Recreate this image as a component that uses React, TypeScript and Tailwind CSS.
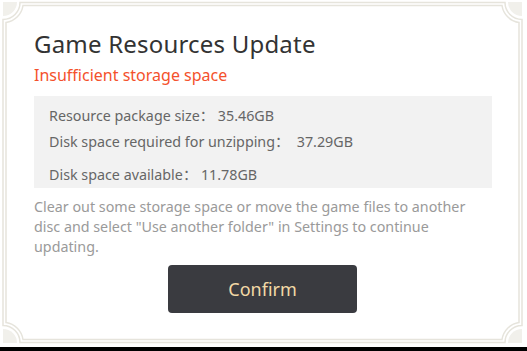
import React from "react";

function Frame() {
  const c = "#e6e4dc";
  return (
    <svg className="absolute inset-0 pointer-events-none" width="527" height="351" viewBox="0 0 527 351">
      <g fill="#f1f0eb">
        <path d="M3 2 H17 A14 14 0 0 1 3 16 Z" />
        <path d="M522 2 H508 A14 14 0 0 0 522 16 Z" />
        <path d="M3 343 H17 A14 14 0 0 0 3 329 Z" />
        <path d="M522 343 H508 A14 14 0 0 1 522 329 Z" />
      </g>
      <g fill="none" stroke={c} strokeWidth="1.5">
        <path d="M20 2.5 H505 A17 17 0 0 0 522 19.5 V325.5 A17 17 0 0 0 505 342.5 H20 A17 17 0 0 0 3 325.5 V19.5 A17 17 0 0 0 20 2.5 Z" />
        <path d="M23 5.5 H502 A20 20 0 0 0 519 22.5 V322.5 A20 20 0 0 0 502 339.5 H23 A20 20 0 0 0 6 322.5 V22.5 A20 20 0 0 0 23 5.5 Z" />
      </g>
    </svg>
  );
}

export default function App() {
  return (
    <div
      className="relative w-[527px] h-[351px] bg-white overflow-hidden"
      style={{ fontFamily: '"Noto Sans", "Noto Sans CJK SC", "Liberation Sans", sans-serif' }}
    >
      <div className="flex flex-col h-[347px] px-[34px] pt-[27px]">
        <div className="text-[24px] leading-[34px] text-[#333333] tracking-[0.2px]">Game Resources Update</div>
        <div className="mt-[3px] text-[16px] leading-[22px] text-[#f4512c]">Insufficient storage space</div>
        <div className="mt-[10px] w-[458px] h-[92px] bg-[#f2f2f2] overflow-hidden pl-[15px] pt-[9px] text-[14.3px] text-[#666666]">
          <div className="leading-[22px]">Resource package size：&nbsp;35.46GB</div>
          <div className="mt-[4px] leading-[22px]">Disk space required for unzipping：&nbsp;&nbsp;37.29GB</div>
          <div className="mt-[11px] leading-[22px]">Disk space available：&nbsp;11.78GB</div>
        </div>
        <div className="mt-[9px] w-[440px] text-[14.3px] leading-[20px] text-[#9a9a9a]">
          Clear out some storage space or move the game files to another disc and select "Use another folder" in Settings to continue updating.
        </div>
        <div className="flex justify-center mt-[8px]">
          <button className="ml-[-2px] w-[189px] h-[48px] rounded-[4px] bg-[#3a3b40] text-[18px] text-[#f2d9a6]">
            Confirm
          </button>
        </div>
      </div>
      <div className="absolute left-0 right-0 bottom-0 h-[4px] bg-black" />
      <Frame />
    </div>
  );
}
